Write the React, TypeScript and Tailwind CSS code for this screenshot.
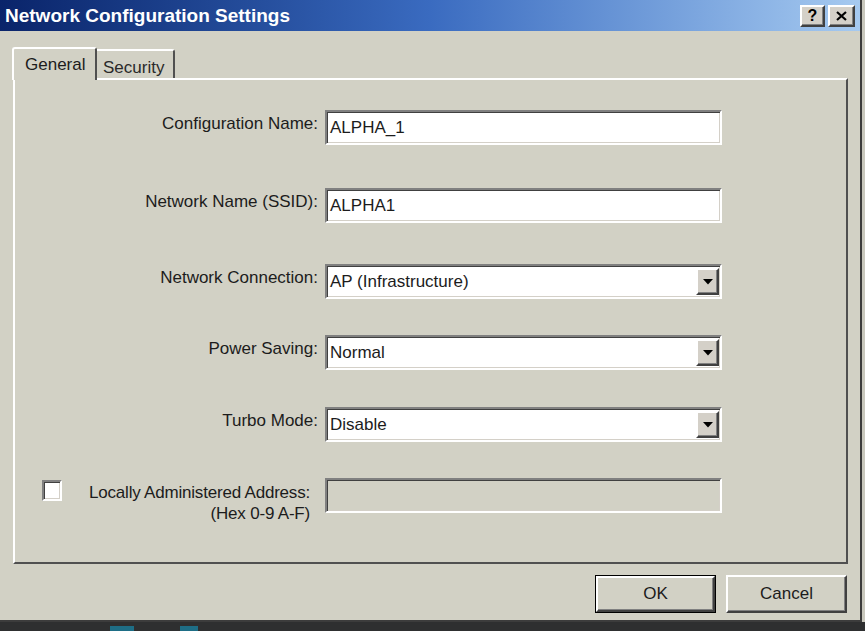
import React from "react";

const raised =
  "border-2 border-t-white border-l-white border-b-[#404040] border-r-[#404040] shadow-[inset_-1px_-1px_0_#808080]";
const sunken =
  "border-2 border-t-[#808080] border-l-[#808080] border-b-white border-r-white shadow-[inset_1px_1px_0_#404040,inset_-1px_-1px_0_#d4d0c8]";

function Label({ children }: { children: React.ReactNode }) {
  return (
    <div className="w-[303px] shrink-0 pt-[3px] text-right leading-[21px]">
      {children}
    </div>
  );
}

function TextField({ value }: { value: string }) {
  return (
    <div className={`w-[397px] h-[35px] bg-white flex items-center pl-[3px] ${sunken}`}>
      {value}
    </div>
  );
}

function SelectField({ value }: { value: string }) {
  return (
    <div className={`w-[397px] h-[35px] bg-white flex items-center pl-[3px] ${sunken}`}>
      <span className="flex-1">{value}</span>
      <div
        className={`w-[23px] h-[27px] mr-[1px] bg-[#d4d0c8] flex items-center justify-center ${raised}`}
      >
        <svg width="10" height="6" viewBox="0 0 10 6">
          <path d="M0 0 H10 L5 5.5 Z" fill="#000" />
        </svg>
      </div>
    </div>
  );
}

export default function App() {
  return (
    <div
      className="w-[865px] h-[631px] bg-[#c9c8bd] flex flex-col overflow-hidden text-[17px] text-[#1c1c1c]"
      style={{ fontFamily: '"Liberation Sans", Arial, sans-serif' }}
    >
      {/* window */}
      <div className="w-[862px] h-[622px] bg-[#d2d1c5] border-r-2 border-b-2 border-[#3c3c3c] flex flex-col shrink-0">
        {/* title bar */}
        <div className="h-[31px] shrink-0 flex items-center pl-[5px] pr-[5px] bg-gradient-to-r from-[#0a246a] via-[#3a6bc0] to-[#a6caf0]">
          <span className="flex-1 text-white font-bold text-[19px] leading-none">
            Network Configuration Settings
          </span>
          <div className="flex gap-[3px]">
            <div
              className={`w-[25px] h-[22px] bg-[#d4d0c8] flex items-center justify-center font-bold text-[16px] leading-none text-black ${raised}`}
            >
              ?
            </div>
            <div
              className={`w-[27px] h-[22px] bg-[#d4d0c8] flex items-center justify-center ${raised}`}
            >
              <svg width="11" height="10" viewBox="0 0 11 10">
                <path d="M1 1 L10 9 M10 1 L1 9" stroke="#000" strokeWidth="2.2" />
              </svg>
            </div>
          </div>
        </div>

        {/* tabs */}
        <div className="mt-[16px] ml-[12px] flex items-end h-[31px] shrink-0">
          <div className="relative z-10 -mb-[2px] w-[85px] h-[33px] bg-[#d2d1c5] border-t-2 border-l-2 border-r-2 border-t-white border-l-white border-r-[#505050] rounded-t-[3px] pl-[11px] pt-[3px]">
            General
          </div>
          <div className="w-[78px] h-[29px] border-t-2 border-r-2 border-t-white border-r-[#505050] rounded-tr-[3px] pl-[6px] pt-[4px] text-[#2a2a2a]">
            Security
          </div>
        </div>

        {/* panel */}
        <div className="ml-[13px] w-[835px] h-[486px] shrink-0 border-2 border-t-white border-l-white border-b-[#505050] border-r-[#505050] flex flex-col">
          <div className="mt-[30px] flex gap-[7px]">
            <Label>Configuration Name:</Label>
            <TextField value="ALPHA_1" />
          </div>
          <div className="mt-[43px] flex gap-[7px]">
            <Label>Network Name (SSID):</Label>
            <TextField value="ALPHA1" />
          </div>
          <div className="mt-[41px] flex gap-[7px]">
            <Label>Network Connection:</Label>
            <SelectField value="AP (Infrastructure)" />
          </div>
          <div className="mt-[36px] flex gap-[7px]">
            <Label>Power Saving:</Label>
            <SelectField value="Normal" />
          </div>
          <div className="mt-[37px] flex gap-[7px]">
            <Label>Turbo Mode:</Label>
            <SelectField value="Disable" />
          </div>
          <div className="mt-[36px] flex gap-[7px]">
            <div className="w-[303px] shrink-0 flex items-start pl-[27px] pr-[8px]">
              <div className={`mt-[2px] w-[20px] h-[21px] bg-white ${sunken}`} />
              <div className="flex-1 text-right leading-[21px] pt-[4px] tracking-[-0.2px]">
                <div>Locally Administered Address:</div>
                <div>(Hex 0-9 A-F)</div>
              </div>
            </div>
            <div className={`w-[397px] h-[35px] bg-[#d2d1c5] ${sunken}`} />
          </div>
        </div>

        {/* buttons */}
        <div className="mt-[11px] ml-[595px] flex gap-[10px]">
          <div className="w-[121px] h-[38px] border border-black">
            <div
              className={`w-full h-full bg-[#d2d1c5] flex items-center justify-center ${raised}`}
            >
              OK
            </div>
          </div>
          <div
            className={`w-[121px] h-[38px] bg-[#d2d1c5] flex items-center justify-center ${raised}`}
          >
            Cancel
          </div>
        </div>
      </div>

      {/* desktop strip below */}
      <div className="flex-1 bg-[#2e2f30] flex items-end">
        <div className="ml-[110px] w-[24px] h-[5px] bg-[#1e6e86]" />
        <div className="ml-[46px] w-[18px] h-[5px] bg-[#1e6e86]" />
      </div>
    </div>
  );
}
